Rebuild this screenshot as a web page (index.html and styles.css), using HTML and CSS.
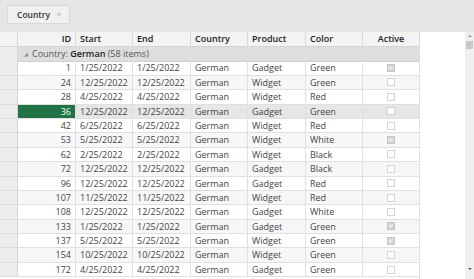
FILE: index.html
```html
<!DOCTYPE html>
<html lang="en">
<head>
    <meta charset="UTF-8">
    <title>Grouped Grid</title>
    <link rel="stylesheet" href="styles.css">
</head>
<body>
    <div class="group-panel">
        <div class="group-chip">Country <span class="chip-close">&times;</span></div>
    </div>

    <div class="grid-area">
        <div class="grid">
            <div class="row header">
                <div class="cell rh"></div>
                <div class="cell num">ID</div>
                <div class="cell">Start</div>
                <div class="cell">End</div>
                <div class="cell">Country</div>
                <div class="cell">Product</div>
                <div class="cell">Color</div>
                <div class="cell center">Active</div>
            </div>
            <div class="row group-row">
                <div class="cell rh"></div>
                <div class="group-label"><span class="caret">&#9698;</span>Country: <b>German</b> (58 items)</div>
            </div>

            <div class="row"><div class="cell rh"></div><div class="cell num">1</div><div class="cell">1/25/2022</div><div class="cell">1/25/2022</div><div class="cell">German</div><div class="cell">Gadget</div><div class="cell">Green</div><div class="cell center"><span class="check on"></span></div></div>
            <div class="row alt"><div class="cell rh"></div><div class="cell num">24</div><div class="cell">12/25/2022</div><div class="cell">12/25/2022</div><div class="cell">German</div><div class="cell">Widget</div><div class="cell">Green</div><div class="cell center"><span class="check"></span></div></div>
            <div class="row"><div class="cell rh"></div><div class="cell num">28</div><div class="cell">4/25/2022</div><div class="cell">4/25/2022</div><div class="cell">German</div><div class="cell">Widget</div><div class="cell">Red</div><div class="cell center"><span class="check"></span></div></div>
            <div class="row selected"><div class="cell rh"></div><div class="cell num current">36</div><div class="cell">12/25/2022</div><div class="cell">12/25/2022</div><div class="cell">German</div><div class="cell">Gadget</div><div class="cell">Green</div><div class="cell center"><span class="check"></span></div></div>
            <div class="row"><div class="cell rh"></div><div class="cell num">42</div><div class="cell">6/25/2022</div><div class="cell">6/25/2022</div><div class="cell">German</div><div class="cell">Widget</div><div class="cell">Red</div><div class="cell center"><span class="check"></span></div></div>
            <div class="row alt"><div class="cell rh"></div><div class="cell num">53</div><div class="cell">5/25/2022</div><div class="cell">5/25/2022</div><div class="cell">German</div><div class="cell">Widget</div><div class="cell">White</div><div class="cell center"><span class="check on"></span></div></div>
            <div class="row"><div class="cell rh"></div><div class="cell num">62</div><div class="cell">2/25/2022</div><div class="cell">2/25/2022</div><div class="cell">German</div><div class="cell">Widget</div><div class="cell">Black</div><div class="cell center"><span class="check"></span></div></div>
            <div class="row alt"><div class="cell rh"></div><div class="cell num">72</div><div class="cell">12/25/2022</div><div class="cell">12/25/2022</div><div class="cell">German</div><div class="cell">Gadget</div><div class="cell">Black</div><div class="cell center"><span class="check"></span></div></div>
            <div class="row"><div class="cell rh"></div><div class="cell num">96</div><div class="cell">12/25/2022</div><div class="cell">12/25/2022</div><div class="cell">German</div><div class="cell">Gadget</div><div class="cell">Red</div><div class="cell center"><span class="check"></span></div></div>
            <div class="row alt"><div class="cell rh"></div><div class="cell num">107</div><div class="cell">11/25/2022</div><div class="cell">11/25/2022</div><div class="cell">German</div><div class="cell">Widget</div><div class="cell">Red</div><div class="cell center"><span class="check"></span></div></div>
            <div class="row"><div class="cell rh"></div><div class="cell num">108</div><div class="cell">12/25/2022</div><div class="cell">12/25/2022</div><div class="cell">German</div><div class="cell">Gadget</div><div class="cell">White</div><div class="cell center"><span class="check"></span></div></div>
            <div class="row alt"><div class="cell rh"></div><div class="cell num">133</div><div class="cell">1/25/2022</div><div class="cell">1/25/2022</div><div class="cell">German</div><div class="cell">Gadget</div><div class="cell">Green</div><div class="cell center"><span class="check on"></span></div></div>
            <div class="row"><div class="cell rh"></div><div class="cell num">137</div><div class="cell">5/25/2022</div><div class="cell">5/25/2022</div><div class="cell">German</div><div class="cell">Widget</div><div class="cell">Green</div><div class="cell center"><span class="check on"></span></div></div>
            <div class="row alt"><div class="cell rh"></div><div class="cell num">154</div><div class="cell">10/25/2022</div><div class="cell">10/25/2022</div><div class="cell">German</div><div class="cell">Widget</div><div class="cell">Green</div><div class="cell center"><span class="check"></span></div></div>
            <div class="row"><div class="cell rh"></div><div class="cell num">172</div><div class="cell">4/25/2022</div><div class="cell">4/25/2022</div><div class="cell">German</div><div class="cell">Gadget</div><div class="cell">Green</div><div class="cell center"><span class="check"></span></div></div>
        </div>

        <div class="scrollbar">
            <span class="arrow up"></span>
            <span class="thumb"></span>
            <span class="track"></span>
            <span class="arrow down"></span>
        </div>
    </div>
</body>
</html>
```

FILE: styles.css
```css
body {
    margin: 0;
    font-family: "Open Sans", "Noto Sans", sans-serif;
    font-size: 9px;
    color: #444;
    background: #fff;
    overflow: hidden;
}

.group-panel {
    height: 32px;
    background: #e6e6e6;
    box-sizing: border-box;
    padding: 5px 0 0 7px;
}

.group-chip {
    display: inline-flex;
    align-items: center;
    height: 19px;
    box-sizing: border-box;
    padding: 0 8px 0 9px;
    background: #f0f0f0;
    border: 1px solid #d9d9d9;
    font-weight: 600;
    font-size: 8.5px;
    color: #333;
}

.chip-close {
    font-weight: 400;
    color: #999;
    font-size: 7px;
    margin-left: 7px;
}

.grid-area {
    display: flex;
    height: 247px;
}

.grid {
    width: 420px;
    border-right: 1px solid #dcdcdc;
    box-sizing: border-box;
}

.row {
    display: grid;
    grid-template-columns: 18px 58px 57px 58px 57px 58px 57px 57px;
    height: 14.4px;
}

.row.alt {
    background: #f7f7f7;
}

.row.selected {
    background: #e6e6e6;
}

.cell {
    border-right: 1px solid #e0e0e0;
    border-bottom: 1px solid #e0e0e0;
    padding: 0 4px;
    line-height: 13.4px;
    white-space: nowrap;
    overflow: hidden;
}

.cell.num {
    text-align: right;
}

.cell.center {
    display: flex;
    align-items: center;
    justify-content: center;
}

.cell.rh {
    background: #ececec;
    border-right-color: #d6d6d6;
    border-bottom-color: #dcdcdc;
    padding: 0;
}

.cell.current {
    background: #217346;
    color: #fff;
}

.header {
    height: 15px;
    background: #f3f3f3;
}

.header .cell {
    font-weight: 600;
    color: #222;
    line-height: 14px;
    border-right-color: #dadada;
    border-bottom-color: #d4d4d4;
}

.header .cell.rh {
    background: #f3f3f3;
}

.group-row {
    grid-template-columns: 18px 1fr;
    background: #dedede;
}

.group-label {
    border-bottom: 1px solid #d0d0d0;
    line-height: 13.4px;
    padding-left: 6px;
    color: #555;
}

.group-label b {
    font-weight: 600;
    color: #222;
}

.caret {
    font-size: 5px;
    color: #888;
    margin-right: 4px;
    vertical-align: 1px;
}

.check {
    width: 6px;
    height: 6px;
    border: 1px solid #d4d4d4;
    background: #fff;
    position: relative;
}

.check.on {
    background: #d4d4d4;
    border-color: #c4c4c4;
}

.check.on::after {
    content: "";
    position: absolute;
    left: 1px;
    top: 0;
    width: 2px;
    height: 3px;
    border-right: 1px solid #f4f4f4;
    border-bottom: 1px solid #f4f4f4;
    transform: rotate(40deg);
}

.scrollbar {
    margin-left: auto;
    width: 9px;
    background: #f0f0f0;
    display: flex;
    flex-direction: column;
    align-items: center;
}

.arrow {
    width: 0;
    height: 0;
    border-left: 2px solid transparent;
    border-right: 2px solid transparent;
    margin: 3px 0;
}

.arrow.up {
    border-bottom: 2px solid #888;
}

.arrow.down {
    border-top: 2px solid #555;
    margin-bottom: 9px;
}

.thumb {
    width: 7px;
    height: 8px;
    background: #c8c8c8;
    margin-top: 1px;
}

.track {
    flex: 1;
}
```
